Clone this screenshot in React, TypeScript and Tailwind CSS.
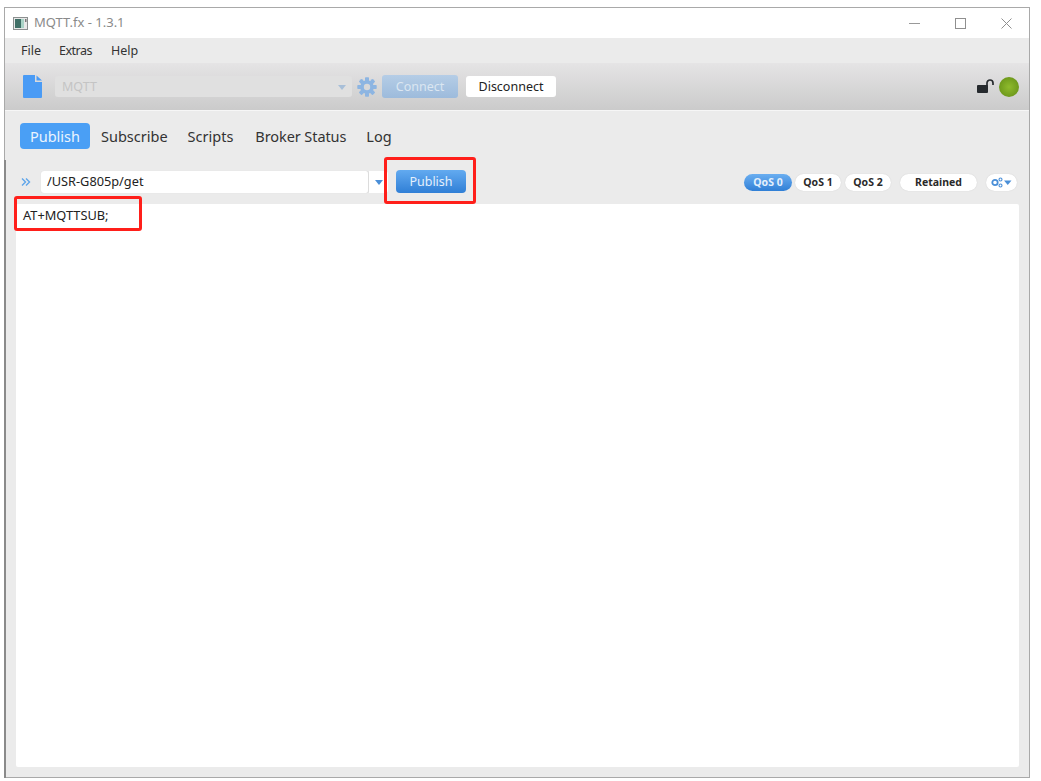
import React from "react";

const font = { fontFamily: '"Noto Sans", "Open Sans", sans-serif' };

function Pill({ children, w, active }: { children: React.ReactNode; w: string; active?: boolean }) {
  return (
    <div
      className={`${w} h-[17px] rounded-full flex items-center justify-center text-[10.5px] font-bold leading-none ${
        active ? "bg-gradient-to-b from-[#6aaef0] to-[#2f7fd6] text-[#e4f0fc]" : "bg-white text-[#2a2a2a] shadow-[0_0_1px_#c4c4c4]"
      }`}
    >
      {children}
    </div>
  );
}

export default function App() {
  return (
    <div className="relative w-[1041px] h-[781px] bg-white pt-[7px] pl-[4px] overflow-hidden" style={font}>
      <div className="relative w-[1026px] h-[771px] border border-[#a9a9a9] flex flex-col bg-[#ebebeb]">
        {/* title bar */}
        <div className="h-[30px] bg-white flex items-center shrink-0 pl-[8px]">
          <svg width="15" height="13" viewBox="0 0 15 13" className="mr-[6px]">
            <rect x="0.5" y="0.5" width="14" height="12" fill="#e8e8e8" stroke="#8b8f8f" />
            <rect x="2" y="2" width="6" height="9" fill="#3f6f66" />
            <rect x="8" y="2" width="3" height="9" fill="#a9d3c6" />
            <rect x="12" y="2" width="1.5" height="3" fill="#777" />
          </svg>
          <span className="text-[13px] text-[#8a8a8a] leading-none mt-[-2px]">MQTT.fx - 1.3.1</span>
          <div className="ml-auto flex items-center">
            <svg width="11" height="1" className="mr-[35px]"><rect width="11" height="1" fill="#999" /></svg>
            <svg width="11" height="11" className="mr-[35px]"><rect x="0.5" y="0.5" width="10" height="10" fill="none" stroke="#8f8f8f" /></svg>
            <svg width="11" height="11" className="mr-[17px]"><path d="M0.5 0.5L10.5 10.5M10.5 0.5L0.5 10.5" stroke="#8f8f8f" fill="none" /></svg>
          </div>
        </div>
        {/* menu */}
        <div className="h-[25px] shrink-0 flex items-center pl-[16px] pt-[2px] text-[12.5px] text-[#333] leading-none">
          <span>File</span>
          <span className="ml-[18px] tracking-[-0.5px]">Extras</span>
          <span className="ml-[19px]">Help</span>
        </div>
        {/* toolbar */}
        <div className="h-[47px] shrink-0 bg-gradient-to-b from-[#e5e4e5] to-[#cbcbcb] flex items-center pl-[18px] pr-[10px]">
          <svg width="19" height="23" viewBox="0 0 19 23" className="mr-[13px]">
            <path d="M1 0H12V7H19V22a1 1 0 0 1-1 1H1a1 1 0 0 1-1-1V1a1 1 0 0 1 1-1Z" fill="#4a9bf5" />
            <path d="M13.5 0.5L19 5.5H13.5Z" fill="#4a9bf5" />
          </svg>
          <div className="w-[297px] h-[21px] bg-[#e0e0e0] rounded-[3px] flex items-center pl-[7px] pr-[6px] pt-[1px] text-[12.5px] text-[#c4c4c4]">
            <span>MQTT</span>
            <svg width="8" height="5" className="ml-auto"><path d="M0 0H8L4 5Z" fill="#a8bfd8" /></svg>
          </div>
          <svg width="20" height="20" viewBox="0 0 20 20" className="ml-[5px] mr-[5px]">
            <g fill="#8db5e2">
              <circle cx="10" cy="10" r="6.8" />
              {[0, 45, 90, 135, 180, 225, 270, 315].map((a) => (
                <rect key={a} x="8" y="0.3" width="4" height="4" rx="0.7" transform={`rotate(${a} 10 10)`} />
              ))}
            </g>
            <circle cx="10" cy="10" r="3.2" fill="#d8d8d9" />
          </svg>
          <div className="w-[76px] h-[23px] rounded-[3px] bg-gradient-to-b from-[#b5cde6] to-[#9dbbdc] flex items-center justify-center pt-[1px] text-[12.5px] text-[#dbe6f1]">
            Connect
          </div>
          <div className="ml-[8px] w-[90px] h-[21px] rounded-[3px] bg-white flex items-center justify-center pt-[1px] text-[12.5px] text-[#222]">
            Disconnect
          </div>
          <div className="ml-auto flex items-center">
            <svg width="17" height="15" viewBox="0 0 17 15" className="mr-[5px]">
              <rect x="0" y="6" width="11" height="8" rx="1" fill="#262a2e" />
              <path d="M10 7V4a3 3 0 0 1 6 0V6" fill="none" stroke="#262a2e" strokeWidth="1.7" />
            </svg>
            <div className="w-[20px] h-[20px] rounded-full bg-[radial-gradient(circle,#8fbb2c_0%,#6f9a1c_70%,#5f8a18_100%)]" />
          </div>
        </div>
        <div className="h-px bg-[#f6f6f6] shrink-0" />
        {/* tabs */}
        <div className="h-[26px] mt-[12px] shrink-0 flex items-center pl-[15px] text-[14.5px] text-[#333] leading-none">
          <div className="h-[26px] w-[70px] rounded-[4px] bg-[#4a9ff5] text-[#eaf4fe] flex items-center justify-center">Publish</div>
          <span className="ml-[11px]">Subscribe</span>
          <span className="ml-[20px]">Scripts</span>
          <span className="ml-[22px] tracking-[-0.08px]">Broker Status</span>
          <span className="ml-[20px]">Log</span>
        </div>
        {/* topic row */}
        <div className="h-[23px] mt-[21px] shrink-0 flex items-center pl-[16px] pr-[12px]">
          <svg width="10" height="10" viewBox="0 0 10 10" className="mr-[10px] mt-[1px]">
            <path d="M1 1.5L4.5 5L1 8.5M5 1.5L8.5 5L5 8.5" fill="none" stroke="#5fa5ea" strokeWidth="1.4" />
          </svg>
          <div className="w-[328px] h-[22px] self-end bg-white rounded-[3px] flex items-center pl-[6px] text-[12.75px] text-[#222] border-r border-[#dcdcdc] shadow-[0_0_1px_#d0d0d0]">
            /USR-G805p/get
          </div>
          <div className="w-[19px] h-[22px] self-end bg-white rounded-r-[3px] flex items-center justify-center mr-[8px]">
            <svg width="8" height="5"><path d="M0 0H8L4 5Z" fill="#4a8fd8" /></svg>
          </div>
          <div className="w-[70px] h-[23px] rounded-[4px] bg-gradient-to-b from-[#62aaf0] to-[#2f7fd6] flex items-center justify-center pt-[1px] text-[12.5px] text-[#e4f0fc]">
            Publish
          </div>
          <div className="ml-auto flex items-center mt-[1px]">
            <Pill w="w-[48px]" active>QoS 0</Pill>
            <div className="ml-[3px]"><Pill w="w-[46px]">QoS 1</Pill></div>
            <div className="ml-[4px]"><Pill w="w-[46px]">QoS 2</Pill></div>
            <div className="ml-[9px]"><Pill w="w-[77px]">Retained</Pill></div>
            <div className="ml-[9px]">
              <Pill w="w-[31px]">
                <svg width="22" height="11" viewBox="0 0 22 11">
                  <circle cx="4" cy="5.5" r="2.7" fill="none" stroke="#4a8fd8" strokeWidth="1.8" />
                  <circle cx="9.5" cy="2.5" r="1.5" fill="none" stroke="#4a8fd8" strokeWidth="1.1" />
                  <circle cx="9.5" cy="8.5" r="1.5" fill="none" stroke="#4a8fd8" strokeWidth="1.1" />
                  <path d="M13 3.5H20.5L16.75 8Z" fill="#4a8fd8" />
                </svg>
              </Pill>
            </div>
          </div>
        </div>
        {/* editor */}
        <div className="ml-[11px] mr-[10px] mt-[11px] mb-[10px] flex-1 bg-white rounded-[2px] px-[7px] pt-[2px] text-[12.8px] text-[#222]">
          AT+MQTTSUB;
        </div>
        {/* darker left edge */}
        <div className="absolute left-[-1px] top-[152px] bottom-[-1px] w-[2px] bg-[#8a8a8a]" />
      </div>
      {/* annotations */}
      <div className="absolute left-[384px] top-[157px] w-[92px] h-[47px] border-[3px] border-[#ff1f1a] rounded-[3px]" />
      <div className="absolute left-[14px] top-[196px] w-[128px] h-[35px] border-[3px] border-[#ff1f1a] rounded-[3px]" />
    </div>
  );
}
